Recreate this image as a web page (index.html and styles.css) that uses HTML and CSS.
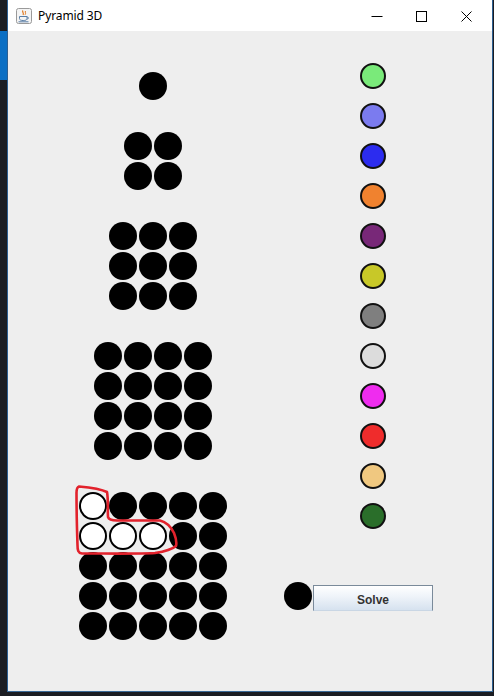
FILE: index.html
```html
<!DOCTYPE html>
<html>
<head>
<meta charset="utf-8">
<title>Pyramid 3D</title>
<link rel="stylesheet" href="styles.css">
</head>
<body>
<div class="window">
  <div class="titlebar">
    <svg class="app-icon" width="16" height="16" viewBox="0 0 16 16">
      <rect x="0.5" y="0.5" width="15" height="15" rx="2" fill="#f4f4f4" stroke="#9a9a9a"/>
      <path d="M7 2.5 C5.5 4 8.5 5 7 7" fill="none" stroke="#e0761c" stroke-width="1.2"/>
      <path d="M9.5 3 C8.5 4.5 10.5 5 9 6.8" fill="none" stroke="#e0761c" stroke-width="1"/>
      <path d="M3.5 8.5 H11 V10.5 C11 12 9.5 12.5 7.2 12.5 C5 12.5 3.5 12 3.5 10.5 Z" fill="none" stroke="#5a7ea6" stroke-width="1"/>
      <path d="M11 9 C13 9 13 11 11 11" fill="none" stroke="#5a7ea6" stroke-width="1"/>
      <path d="M2.5 13.8 H12.5" stroke="#5a7ea6" stroke-width="1"/>
    </svg>
    <span class="title">Pyramid 3D</span>
    <div class="controls">
      <svg class="ctl" width="46" height="30" viewBox="0 0 46 30"><path d="M19.5 15.5 H30.5" stroke="#000" stroke-width="1"/></svg>
      <svg class="ctl" width="46" height="30" viewBox="0 0 46 30"><rect x="18.5" y="10.5" width="10" height="10" fill="none" stroke="#000" stroke-width="1"/></svg>
      <svg class="ctl" width="46" height="30" viewBox="0 0 46 30"><path d="M17.5 10.5 L27.5 20.5 M27.5 10.5 L17.5 20.5" stroke="#000" stroke-width="1"/></svg>
    </div>
  </div>
  <div class="content">
    <div class="pyramid">
      <div class="level l1">
        <span class="ball"></span>
      </div>
      <div class="level l2">
        <span class="ball"></span><span class="ball"></span>
        <span class="ball"></span><span class="ball"></span>
      </div>
      <div class="level l3">
        <span class="ball"></span><span class="ball"></span><span class="ball"></span>
        <span class="ball"></span><span class="ball"></span><span class="ball"></span>
        <span class="ball"></span><span class="ball"></span><span class="ball"></span>
      </div>
      <div class="level l4">
        <span class="ball"></span><span class="ball"></span><span class="ball"></span><span class="ball"></span>
        <span class="ball"></span><span class="ball"></span><span class="ball"></span><span class="ball"></span>
        <span class="ball"></span><span class="ball"></span><span class="ball"></span><span class="ball"></span>
        <span class="ball"></span><span class="ball"></span><span class="ball"></span><span class="ball"></span>
      </div>
      <div class="level l5">
        <span class="ball white"></span><span class="ball"></span><span class="ball"></span><span class="ball"></span><span class="ball"></span>
        <span class="ball white"></span><span class="ball white"></span><span class="ball white"></span><span class="ball"></span><span class="ball"></span>
        <span class="ball"></span><span class="ball"></span><span class="ball"></span><span class="ball"></span><span class="ball"></span>
        <span class="ball"></span><span class="ball"></span><span class="ball"></span><span class="ball"></span><span class="ball"></span>
        <span class="ball"></span><span class="ball"></span><span class="ball"></span><span class="ball"></span><span class="ball"></span>
      </div>
    </div>
    <div class="side">
      <div class="palette">
        <span class="chip c-green"></span>
        <span class="chip c-lavender"></span>
        <span class="chip c-blue"></span>
        <span class="chip c-orange"></span>
        <span class="chip c-purple"></span>
        <span class="chip c-olive"></span>
        <span class="chip c-gray"></span>
        <span class="chip c-silver"></span>
        <span class="chip c-magenta"></span>
        <span class="chip c-red"></span>
        <span class="chip c-tan"></span>
        <span class="chip c-dkgreen"></span>
      </div>
      <div class="solve-row">
        <span class="ball"></span>
        <button class="solve">Solve</button>
      </div>
    </div>
    <svg class="annotation" viewBox="8 31 484 660" width="484" height="660">
      <path d="M79 486.5 C90 487.5 101 489 107 492 C108.5 500 107.5 510 108 517 C109 520 112 520.5 117 520.5 L160 520.5 C166 522 171 527 174 533 C176 538 177 542 176 546 C172 549.5 165 551.5 155 553 C140 554 110 553.5 82 553.5 C78 553 77.5 550 77.5 545 C77 530 76.5 505 76.5 493 C76.5 489 77.5 487 79 486.5 Z" fill="none" stroke="#e2222c" stroke-width="2.6" stroke-linejoin="round"/>
    </svg>
  </div>
</div>
</body>
</html>
```

FILE: styles.css
```css
html, body {
  margin: 0;
  padding: 0;
}

body {
  width: 494px;
  height: 696px;
  overflow: hidden;
  background:
    linear-gradient(#0b6fc4, #0b6fc4) 0 31px / 7px 49px no-repeat,
    #1b1d22;
  font-family: "Noto Sans", "Liberation Sans", sans-serif;
}

.window {
  margin-left: 7px;
  width: 484px;
  height: 691px;
  border-left: 1px solid #2d5f91;
  border-right: 1px solid #2d5f91;
  border-bottom: 1px solid #3a6a98;
  display: flex;
  flex-direction: column;
}

.titlebar {
  height: 31px;
  background: #ffffff;
  display: flex;
  align-items: center;
  flex: none;
}

.app-icon {
  margin-left: 8px;
  margin-top: 1px;
  flex: none;
}

.title {
  margin-left: 6px;
  font-size: 12px;
  color: #000;
  letter-spacing: -0.1px;
}

.controls {
  margin-left: auto;
  display: flex;
  margin-right: 2px;
}

.ctl {
  display: block;
}

.content {
  position: relative;
  flex: 1;
  background: #eeeeee;
  display: flex;
  align-items: flex-start;
}

.pyramid {
  margin-left: 71px;
  padding-top: 41px;
  width: 148px;
  display: flex;
  flex-direction: column;
  align-items: center;
  gap: 32px;
}

.level {
  display: grid;
  gap: 2px;
}

.l1 { grid-template-columns: repeat(1, 28px); }
.l2 { grid-template-columns: repeat(2, 28px); }
.l3 { grid-template-columns: repeat(3, 28px); }
.l4 { grid-template-columns: repeat(4, 28px); }
.l5 { grid-template-columns: repeat(5, 28px); }

.ball {
  display: block;
  width: 28px;
  height: 28px;
  border-radius: 50%;
  background: #000;
  box-sizing: border-box;
}

.ball.white {
  background: #ffffff;
  border: 2px solid #000;
}

.side {
  margin-left: 57px;
  display: flex;
  flex-direction: column;
}

.palette {
  margin-left: 76px;
  padding-top: 32px;
  display: flex;
  flex-direction: column;
  gap: 14px;
}

.chip {
  display: block;
  width: 26px;
  height: 26px;
  border-radius: 50%;
  border: 2px solid #111;
  box-sizing: border-box;
}

.c-green { background: #7aea7a; }
.c-lavender { background: #7b7bef; }
.c-blue { background: #2c2cef; }
.c-orange { background: #f0822f; }
.c-purple { background: #782878; }
.c-olive { background: #c8c828; }
.c-gray { background: #7f7f7f; }
.c-silver { background: #dcdcdc; }
.c-magenta { background: #ef2cef; }
.c-red { background: #ef2c2c; }
.c-tan { background: #f0c880; }
.c-dkgreen { background: #2a6e2a; }

.solve-row {
  margin-top: 53px;
  display: flex;
  align-items: flex-start;
  gap: 1px;
}

.solve {
  margin-top: 3px;
  width: 120px;
  height: 26px;
  padding: 4px 0 0;
  border: 1px solid #7a8a9a;
  border-bottom-color: #c9d6e4;
  border-radius: 0;
  background: linear-gradient(#ffffff 0%, #eef3f9 45%, #d6e2ef 100%);
  font-family: "Liberation Sans", Arial, sans-serif;
  font-weight: bold;
  font-size: 12px;
  color: #333333;
  text-align: center;
  line-height: 20px;
}

.annotation {
  position: absolute;
  left: 0;
  top: 0;
  overflow: visible;
  pointer-events: none;
}
```
